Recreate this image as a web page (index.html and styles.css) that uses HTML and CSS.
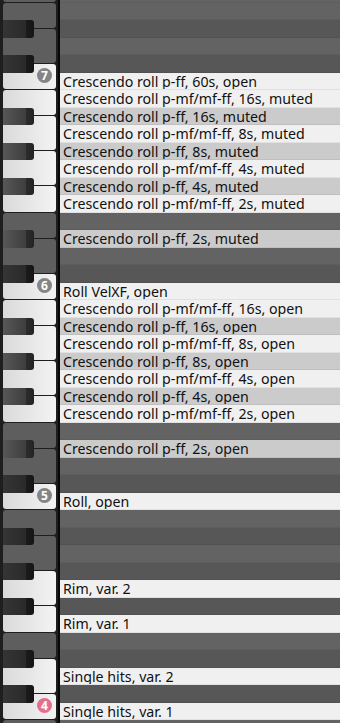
FILE: index.html
```html
<!DOCTYPE html>
<html lang="en">
<head>
    <meta charset="UTF-8">
    <meta name="viewport" content="width=device-width, initial-scale=1.0">
    <title>Key map</title>
    <link rel="stylesheet" href="styles.css">
</head>
<body>
    <div class="roll">

        <!-- octave 7 -->
        <div class="octave">
            <div class="keys">
                <div class="key white n-b"></div>
                <div class="key white n-a"></div>
                <div class="key white n-g"></div>
                <div class="key white n-f"></div>
                <div class="key white n-e"></div>
                <div class="key white n-d"></div>
                <div class="key white n-c lit"><span class="badge">7</span></div>
                <div class="key black n-as"></div>
                <div class="key black n-gs"></div>
                <div class="key black n-fs"></div>
                <div class="key black n-ds"></div>
                <div class="key black n-cs"></div>
            </div>
            <div class="lanes">
                <div class="lane white"></div>
                <div class="lane black"></div>
                <div class="lane white"></div>
                <div class="lane black"></div>
                <div class="lane white"></div>
                <div class="lane black"></div>
                <div class="lane white"></div>
                <div class="lane white"></div>
                <div class="lane black"></div>
                <div class="lane white"></div>
                <div class="lane black"></div>
                <div class="lane white lit">Crescendo roll p-ff, 60s, open</div>
            </div>
        </div>

        <!-- octave 6 -->
        <div class="octave">
            <div class="keys">
                <div class="key white n-b lit"></div>
                <div class="key white n-a lit"></div>
                <div class="key white n-g lit"></div>
                <div class="key white n-f lit"></div>
                <div class="key white n-e"></div>
                <div class="key white n-d"></div>
                <div class="key white n-c lit"><span class="badge">6</span></div>
                <div class="key black n-as lit"></div>
                <div class="key black n-gs lit"></div>
                <div class="key black n-fs lit"></div>
                <div class="key black n-ds lit"></div>
                <div class="key black n-cs"></div>
            </div>
            <div class="lanes">
                <div class="lane white lit">Crescendo roll p-mf/mf-ff, 16s, muted</div>
                <div class="lane black lit">Crescendo roll p-ff, 16s, muted</div>
                <div class="lane white lit">Crescendo roll p-mf/mf-ff, 8s, muted</div>
                <div class="lane black lit">Crescendo roll p-ff, 8s, muted</div>
                <div class="lane white lit">Crescendo roll p-mf/mf-ff, 4s, muted</div>
                <div class="lane black lit">Crescendo roll p-ff, 4s, muted</div>
                <div class="lane white lit">Crescendo roll p-mf/mf-ff, 2s, muted</div>
                <div class="lane white"></div>
                <div class="lane black lit">Crescendo roll p-ff, 2s, muted</div>
                <div class="lane white"></div>
                <div class="lane black"></div>
                <div class="lane white lit">Roll VelXF, open</div>
            </div>
        </div>

        <!-- octave 5 -->
        <div class="octave">
            <div class="keys">
                <div class="key white n-b lit"></div>
                <div class="key white n-a lit"></div>
                <div class="key white n-g lit"></div>
                <div class="key white n-f lit"></div>
                <div class="key white n-e"></div>
                <div class="key white n-d"></div>
                <div class="key white n-c lit"><span class="badge">5</span></div>
                <div class="key black n-as lit"></div>
                <div class="key black n-gs lit"></div>
                <div class="key black n-fs lit"></div>
                <div class="key black n-ds lit"></div>
                <div class="key black n-cs"></div>
            </div>
            <div class="lanes">
                <div class="lane white lit">Crescendo roll p-mf/mf-ff, 16s, open</div>
                <div class="lane black lit">Crescendo roll p-ff, 16s, open</div>
                <div class="lane white lit">Crescendo roll p-mf/mf-ff, 8s, open</div>
                <div class="lane black lit">Crescendo roll p-ff, 8s, open</div>
                <div class="lane white lit">Crescendo roll p-mf/mf-ff, 4s, open</div>
                <div class="lane black lit">Crescendo roll p-ff, 4s, open</div>
                <div class="lane white lit">Crescendo roll p-mf/mf-ff, 2s, open</div>
                <div class="lane white"></div>
                <div class="lane black lit">Crescendo roll p-ff, 2s, open</div>
                <div class="lane white"></div>
                <div class="lane black"></div>
                <div class="lane white lit">Roll, open</div>
            </div>
        </div>

        <!-- octave 4 -->
        <div class="octave">
            <div class="keys">
                <div class="key white n-b"></div>
                <div class="key white n-a"></div>
                <div class="key white n-g lit"></div>
                <div class="key white n-f lit"></div>
                <div class="key white n-e"></div>
                <div class="key white n-d lit"></div>
                <div class="key white n-c lit"><span class="badge root">4</span></div>
                <div class="key black n-as"></div>
                <div class="key black n-gs"></div>
                <div class="key black n-fs"></div>
                <div class="key black n-ds"></div>
                <div class="key black n-cs"></div>
            </div>
            <div class="lanes">
                <div class="lane white"></div>
                <div class="lane black"></div>
                <div class="lane white"></div>
                <div class="lane black"></div>
                <div class="lane white lit">Rim, var. 2</div>
                <div class="lane black"></div>
                <div class="lane white lit">Rim, var. 1</div>
                <div class="lane white"></div>
                <div class="lane black"></div>
                <div class="lane white lit">Single hits, var. 2</div>
                <div class="lane black"></div>
                <div class="lane white lit">Single hits, var. 1</div>
            </div>
        </div>

        <!-- octave 3 -->
        <div class="octave">
            <div class="keys">
                <div class="key white n-b"></div>
                <div class="key white n-a"></div>
                <div class="key white n-g"></div>
                <div class="key white n-f"></div>
                <div class="key white n-e"></div>
                <div class="key white n-d"></div>
                <div class="key white n-c"></div>
                <div class="key black n-as"></div>
                <div class="key black n-gs"></div>
                <div class="key black n-fs"></div>
                <div class="key black n-ds"></div>
                <div class="key black n-cs"></div>
            </div>
            <div class="lanes">
                <div class="lane white"></div>
                <div class="lane black"></div>
                <div class="lane white"></div>
                <div class="lane black"></div>
                <div class="lane white"></div>
                <div class="lane black"></div>
                <div class="lane white"></div>
                <div class="lane white"></div>
                <div class="lane black"></div>
                <div class="lane white"></div>
                <div class="lane black"></div>
                <div class="lane white"></div>
            </div>
        </div>

    </div>
</body>
</html>
```

FILE: styles.css
```css
:root {
    --row: 17.5px;
    --half: 8.75px;
    --key-bg: #1e1e1e;
    --dim-white: #5e5e5e;
    --lane-white: #636363;
    --lane-black: #575757;
    --lit-white: #f0f0f0;
    --lit-black: #cbcbcb;
}

* {
    margin: 0;
    padding: 0;
    box-sizing: border-box;
}

html, body {
    height: 100%;
    overflow: hidden;
}

body {
    font-family: 'Noto Sans', 'Open Sans', sans-serif;
    background-color: var(--key-bg);
    color: #111;
}

/* scrolled so that C7 sits near the top */
.roll {
    margin-top: -120px;
}

.octave {
    display: flex;
}

/* keyboard */
.keys {
    display: grid;
    grid-template-columns: 31px 22px;
    grid-template-rows: repeat(24, var(--half));
    width: 60px;
    flex: none;
    padding: 0 2px 0 3px;
    background-color: var(--key-bg);
    border-right: 2px solid #080808;
}

.key {
    position: relative;
}

.key.white {
    grid-column: 1 / 3;
    margin-bottom: 1px;
    border-radius: 3px;
    background-color: var(--dim-white);
}

.key.white.lit {
    background: linear-gradient(to right, #dadada, #f3f3f3);
}

.key.black {
    grid-column: 1 / 2;
    z-index: 1;
    border-radius: 0 3px 3px 0;
    background: linear-gradient(to right, #353535 0, #2a2a2a 74%, #1b1b1b 74%, #151515 100%);
}

.key.black.lit {
    background: linear-gradient(to right, #575757 0, #3e3e3e 74%, #2c2c2c 74%, #232323 100%);
}

.n-b  { grid-row: 1 / 4; }
.n-a  { grid-row: 4 / 8; }
.n-g  { grid-row: 8 / 12; }
.n-f  { grid-row: 12 / 15; }
.n-e  { grid-row: 15 / 18; }
.n-d  { grid-row: 18 / 22; }
.n-c  { grid-row: 22 / 25; }
.n-as { grid-row: 3 / 5; }
.n-gs { grid-row: 7 / 9; }
.n-fs { grid-row: 11 / 13; }
.n-ds { grid-row: 17 / 19; }
.n-cs { grid-row: 21 / 23; }

.badge {
    position: absolute;
    top: 4px;
    left: 34px;
    width: 15px;
    height: 15px;
    border-radius: 50%;
    background-color: #858585;
    color: white;
    font-size: 12px;
    font-weight: 700;
    line-height: 15px;
    text-align: center;
}

.badge.root {
    background-color: #e36f8e;
}

/* note lanes */
.lanes {
    flex: 1;
    display: flex;
    flex-direction: column;
}

.lane {
    height: var(--row);
    padding-left: 3px;
    font-size: 14.2px;
    line-height: var(--row);
    white-space: nowrap;
    overflow: hidden;
    border-bottom: 1px solid rgba(0,0,0,0.06);
}

.lane.white {
    background-color: var(--lane-white);
}

.lane.black {
    background-color: var(--lane-black);
}

.lane.white.lit {
    background-color: var(--lit-white);
}

.lane.black.lit {
    background-color: var(--lit-black);
}
```
